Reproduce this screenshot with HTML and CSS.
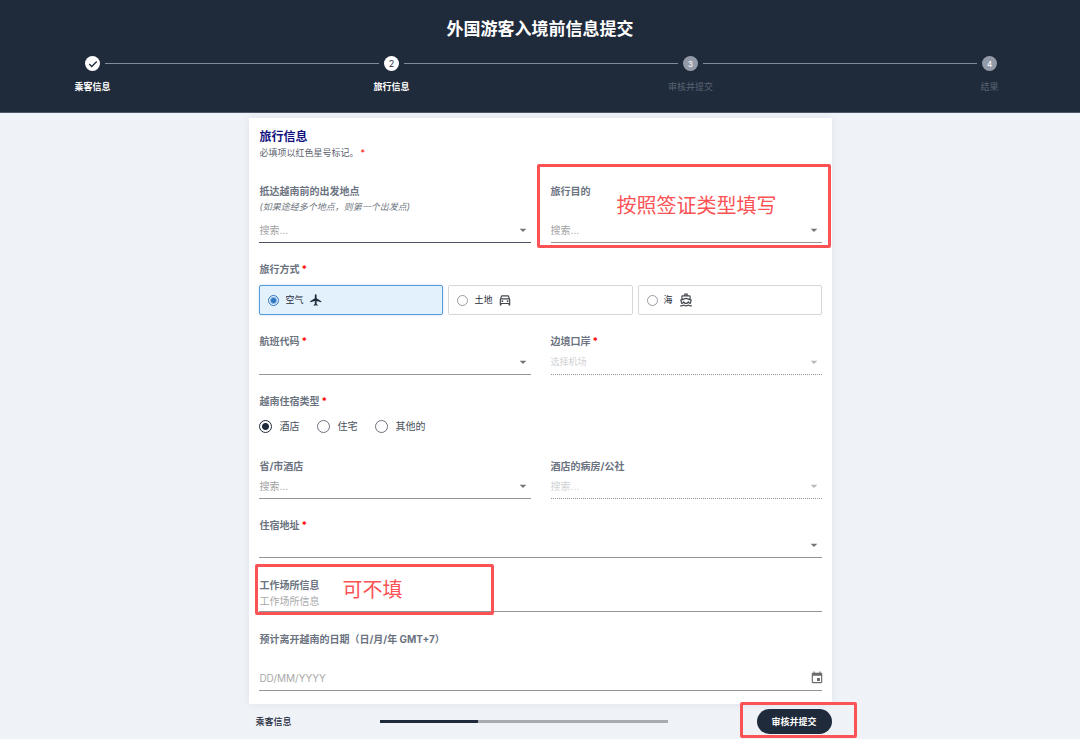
FILE: index.html
```html
<!DOCTYPE html>
<html lang="zh-CN">
<head>
<meta charset="utf-8">
<meta name="viewport" content="width=device-width, initial-scale=1">
<title>外国游客入境前信息提交</title>
<link rel="stylesheet" href="styles.css">
</head>
<body>
<svg class="sprite" aria-hidden="true">
  <symbol id="caret" viewBox="0 0 24 24"><path d="M7 10l5 5 5-5z"/></symbol>
</svg>
<header class="header">
  <h1 class="title">外国游客入境前信息提交</h1>
  <ol class="stepper">
    <li class="step">
      <span class="step-dot"><svg class="step-check" viewBox="0 0 24 24" aria-hidden="true"><path d="M3 12l6 6L21 6"/></svg></span>
      <span class="step-label">乘客信息</span>
    </li>
    <li class="step-line" aria-hidden="true"></li>
    <li class="step" aria-current="step">
      <span class="step-dot">2</span>
      <span class="step-label">旅行信息</span>
    </li>
    <li class="step-line" aria-hidden="true"></li>
    <li class="step step-todo">
      <span class="step-dot">3</span>
      <span class="step-label">审核并提交</span>
    </li>
    <li class="step-line" aria-hidden="true"></li>
    <li class="step step-todo">
      <span class="step-dot">4</span>
      <span class="step-label">结果</span>
    </li>
  </ol>
</header>

<main class="page">
  <form class="card" id="travel-form">
    <h2 class="card-title">旅行信息</h2>
    <p class="card-note">必填项以红色星号标记。<span class="required">*</span></p>

    <div class="row row-first">
      <div class="field">
        <label class="label" for="departure">抵达越南前的出发地点</label>
        <p class="hint">(如果途经多个地点，则第一个出发点)</p>
        <div class="control control-strong">
          <select class="select" id="departure"><option>搜索...</option></select>
          <svg class="caret" aria-hidden="true"><use href="#caret"/></svg>
        </div>
      </div>
      <div class="field marked">
        <label class="label" for="purpose">旅行目的</label>
        <div class="control">
          <select class="select" id="purpose"><option>搜索...</option></select>
          <svg class="caret" aria-hidden="true"><use href="#caret"/></svg>
        </div>
        <div class="mark mark-purpose">按照签证类型填写</div>
      </div>
    </div>

    <fieldset class="group">
      <legend class="label">旅行方式<span class="required">*</span></legend>
      <div class="choices">
        <label class="choice">
          <input class="radio radio-small" type="radio" name="mode" checked>
          <span>空气</span>
          <svg class="choice-icon" viewBox="0 0 24 24" aria-hidden="true"><path d="M21 16v-2l-8-5V3.500C13 2.670 12.330 2 11.500 2S10 2.670 10 3.500V9l-8 5v2l8-2.500V19l-2 1.500V22l3.500-1 3.500 1v-1.500L13 19v-5.500z"/></svg>
        </label>
        <label class="choice">
          <input class="radio radio-small" type="radio" name="mode">
          <span>土地</span>
          <svg class="choice-icon choice-icon-muted" viewBox="0 0 24 24" aria-hidden="true"><path fill-rule="evenodd" d="M18.920 5.010C18.720 4.420 18.160 4 17.500 4h-11c-.66 0-1.210.42-1.420 1.010L3 11v9.500c0 .55.450 1 1 1h1c.55 0 1-.450 1-1V19h12v1.500c0 .55.450 1 1 1h1c.55 0 1-.450 1-1V11zM6.850 6h10.290l1.080 3.110H5.770zM19 17H5v-5.660l.12-.34h13.770l.11.340z"/><circle cx="7.500" cy="14" r="1.500"/><circle cx="16.500" cy="14" r="1.500"/></svg>
        </label>
        <label class="choice">
          <input class="radio radio-small" type="radio" name="mode">
          <span>海</span>
          <svg class="choice-icon choice-icon-muted" viewBox="0 0 24 24" aria-hidden="true"><path fill-rule="evenodd" d="M13 3v1h-2V3h2m2-2H9v3H6c-1.100 0-2 .9-2 2v4.620l-1.290.42c-.26.080-.48.260-.6.500s-.14.520-.06.780L3.950 19H4c1.600 0 3.020-.88 4-2 .98 1.120 2.400 2 4 2s3.020-.88 4-2c.98 1.120 2.400 2 4 2h.05l1.890-6.680c.08-.26.060-.54-.06-.78s-.34-.42-.6-.5L20 10.620V6c0-1.100-.9-2-2-2h-3V1zM6 9.970V6h12v3.970L12 8 6 9.970zm10 3.910l-1.510 1.730C13.780 16.420 12.850 17 12 17s-1.780-.58-2.490-1.390L8 13.880l-1.510 1.730c-.34.390-.72.730-1.120.98l-1.040-3.670 1.920-.63 5.750-1.890 5.750 1.890 1.920.63-1.040 3.670c-.4-.25-.78-.59-1.120-.98zM20 21c-1.390 0-2.780-.47-4-1.320-2.440 1.710-5.560 1.710-8 0C6.780 20.530 5.390 21 4 21H2v2h2c1.380 0 2.740-.35 4-.99 2.520 1.290 5.480 1.290 8 0 1.260.65 2.620.99 4 .99h2v-2z"/></svg>
        </label>
      </div>
    </fieldset>

    <div class="row">
      <div class="field field-spaced">
        <label class="label" for="flight">航班代码<span class="required">*</span></label>
        <div class="control">
          <select class="select" id="flight"><option></option></select>
          <svg class="caret" aria-hidden="true"><use href="#caret"/></svg>
        </div>
      </div>
      <div class="field field-spaced">
        <label class="label" for="border-gate">边境口岸<span class="required">*</span></label>
        <div class="control control-off">
          <select class="select select-small" id="border-gate" disabled><option>选择机场</option></select>
          <svg class="caret" aria-hidden="true"><use href="#caret"/></svg>
        </div>
      </div>
    </div>

    <fieldset class="group">
      <legend class="label">越南住宿类型<span class="required">*</span></legend>
      <div class="options">
        <label class="option"><input class="radio" type="radio" name="stay" checked>酒店</label>
        <label class="option"><input class="radio" type="radio" name="stay">住宅</label>
        <label class="option"><input class="radio" type="radio" name="stay">其他的</label>
      </div>
    </fieldset>

    <div class="row row-spaced">
      <div class="field">
        <label class="label" for="province">省/市酒店</label>
        <div class="control">
          <select class="select" id="province"><option>搜索...</option></select>
          <svg class="caret" aria-hidden="true"><use href="#caret"/></svg>
        </div>
      </div>
      <div class="field">
        <label class="label" for="ward">酒店的病房/公社</label>
        <div class="control control-off">
          <select class="select" id="ward" disabled><option>搜索...</option></select>
          <svg class="caret" aria-hidden="true"><use href="#caret"/></svg>
        </div>
      </div>
    </div>

    <div class="row">
      <div class="field">
        <label class="label" for="address">住宿地址<span class="required">*</span></label>
        <div class="control">
          <select class="select" id="address"><option></option></select>
          <svg class="caret" aria-hidden="true"><use href="#caret"/></svg>
        </div>
      </div>
    </div>

    <div class="row row-text">
      <div class="field marked">
        <label class="label" for="workplace">工作场所信息</label>
        <div class="control control-short">
          <input class="input" id="workplace" type="text" placeholder="工作场所信息">
        </div>
        <div class="mark mark-workplace">可不填</div>
      </div>
    </div>

    <div class="row row-text">
      <div class="field field-date">
        <label class="label" for="leave-date">预计离开越南的日期（日/月/年 GMT+7）</label>
        <div class="control">
          <input class="input" id="leave-date" type="text" placeholder="DD/MM/YYYY">
          <button class="date-button" type="button" aria-label="选择日期"><svg class="date-icon" viewBox="0 0 24 24" aria-hidden="true"><path fill-rule="evenodd" d="M16 1v2H8V1H6v2H5c-1.110 0-2 .9-2 2v14c0 1.100.890 2 2 2h14c1.100 0 2-.9 2-2V5c0-1.100-.9-2-2-2h-1V1zM5 8h14v11H5zM12 12h5v5h-5z"/></svg></button>
        </div>
      </div>
    </div>
  </form>

  <footer class="footer">
    <a class="back" href="#">乘客信息</a>
    <progress class="progress" value="34" max="100" aria-label="进度"></progress>
    <div class="marked">
      <button class="submit" type="submit" form="travel-form">审核并提交</button>
      <div class="mark mark-submit"></div>
    </div>
  </footer>
</main>
</body>
</html>
```

FILE: styles.css
```css
* {
  box-sizing: border-box;
}

body {
  margin: 0;
  background: #eff3f8;
  color: #1f2a3b;
  font-family: Inter, "Noto Sans CJK SC", sans-serif;
  font-size: 10px;
  line-height: 16px;
}

h1, h2, p, ol, fieldset {
  margin: 0;
  padding: 0;
  border: 0;
}

.sprite {
  display: none;
}

/* Header and stepper */
.header {
  padding: 16px 0 17px;
  background: #1f2a3b;
  border-bottom: 1px solid #4e566a;
}

.title {
  color: #fff;
  font-size: 17px;
  font-weight: 700;
  line-height: 26px;
  text-align: center;
}

.stepper {
  display: flex;
  padding: 14px 83px 0 85px;
  list-style: none;
}

.step {
  display: flex;
  flex-direction: column;
  align-items: center;
  gap: 8px;
  width: 15px;
  color: #fff;
  font-size: 9px;
  font-weight: 700;
}

.step-dot {
  display: flex;
  align-items: center;
  justify-content: center;
  width: 15px;
  height: 15px;
  border-radius: 50%;
  background: #fff;
  color: #1f2a3b;
  font-weight: 400;
}

.step-check {
  width: 10px;
  height: 10px;
  fill: none;
  stroke: #1f2a3b;
  stroke-width: 3;
}

.step-label {
  white-space: nowrap;
}

.step-line {
  flex: 1;
  height: 1px;
  margin: 7px 5px 0;
  background: #858b96;
}

.step-todo {
  color: #5a6372;
  font-weight: 400;
}

.step-todo .step-dot {
  background: #949ba8;
  color: #fff;
  font-size: 8px;
}

/* Form card */
.page {
  width: 54%;
  min-width: 560px;
  margin: 5px auto 0;
  padding-left: 1px;
}

.card {
  padding: 10px 10px 13px;
  background: #fff;
  box-shadow: 0 0 8px rgba(31, 41, 90, 0.08);
}

.card-title {
  color: #12127f;
  font-size: 12px;
  font-weight: 700;
  line-height: 18px;
}

.card-note {
  color: #5c636e;
  font-size: 9px;
  line-height: 13px;
}

.required {
  margin-left: 2px;
  color: #f00;
}

.row {
  display: flex;
  gap: 20px;
  margin-top: 18px;
}

.row-first {
  margin-top: 24px;
}

.row-spaced {
  margin-top: 23px;
}

.row-text {
  margin-top: 19px;
}

.field {
  display: flex;
  flex: 1;
  flex-direction: column;
}

.field-spaced {
  gap: 1px;
}

.label {
  padding: 0;
  color: #6b7380;
  font-weight: 700;
}

.hint {
  margin-bottom: 3px;
  color: #6f7680;
  font-size: 9px;
  font-style: italic;
}

.control {
  display: grid;
  align-items: center;
  height: 25px;
  margin-top: auto;
  border-bottom: 1px solid #949494;
}

.control > * {
  grid-area: 1 / 1;
}

.control-strong {
  border-bottom-color: #4b5362;
}

.control-off {
  border-bottom-style: dotted;
}

.control-short {
  align-items: start;
  height: 19px;
}

.select,
.input {
  width: 100%;
  min-width: 0;
  height: 16px;
  padding: 0;
  border: 0;
  outline: 0;
  background: none;
  color: #a2a2a2;
  font: inherit;
  appearance: none;
}

.input::placeholder {
  color: #a9a9a9;
}

.select:disabled {
  color: #d0d2d4;
  opacity: 1;
}

.select-small {
  font-size: 9px;
}

.caret {
  justify-self: end;
  width: 16px;
  height: 16px;
  fill: #757575;
  pointer-events: none;
}

.control-off .caret {
  fill: #b8b8b8;
}

.field-date {
  gap: 19px;
}

.date-button {
  display: flex;
  justify-self: end;
  margin-right: -2px;
  padding: 0;
  border: 0;
  background: none;
}

.date-icon {
  width: 14px;
  height: 14px;
  fill: #6b6b6b;
}

/* Radio groups */
.group {
  min-width: 0;
  margin-top: 18px;
}

.choices {
  display: grid;
  grid-template-columns: repeat(3, 1fr);
  gap: 5px;
  margin-top: 8px;
}

.choice {
  display: flex;
  align-items: center;
  gap: 6px;
  height: 30px;
  padding: 0 8px;
  border: 1px solid #d6d6d6;
  border-radius: 2px;
  font-size: 9px;
}

.choice:has(:checked) {
  border-color: #5499dc;
  background: #e3f1fd;
  box-shadow: 0 0 3px rgba(84, 153, 220, 0.3);
}

.choice-icon {
  width: 14px;
  height: 14px;
  fill: #1f2a3b;
}

.choice-icon-muted {
  fill: #45494f;
}

.radio {
  width: 13px;
  height: 13px;
  margin: 0;
  border: 1px solid #6a707c;
  border-radius: 50%;
  appearance: none;
}

.radio:checked {
  border-color: #1f2a3b;
  background: radial-gradient(circle, #1f2a3b 3px, transparent 4px);
}

.radio-small {
  width: 11px;
  height: 11px;
  border-color: #9c9c9c;
}

.radio-small:checked {
  border-color: #2e75c2;
  background: radial-gradient(circle, #2e75c2 2px, transparent 4px);
}

.options {
  display: flex;
  gap: 18px;
  margin-top: 8px;
}

.option {
  display: flex;
  align-items: center;
  gap: 7px;
  height: 18px;
  color: #4a505b;
}

/* Bottom bar */
.footer {
  display: flex;
  align-items: center;
  justify-content: space-between;
  padding: 5px 0 5px 6px;
}

.back {
  color: #1f2a3b;
  font-size: 9px;
  font-weight: 500;
  text-decoration: none;
}

.progress {
  width: 50%;
  height: 3px;
  border: 0;
  background: #a8abb2;
  appearance: none;
}

.progress::-webkit-progress-bar {
  background: #a8abb2;
}

.progress::-webkit-progress-value {
  background: #1f2a3b;
}

.submit {
  display: block;
  height: 25px;
  padding: 0 15px;
  border: 0;
  border-radius: 13px;
  background: #1f2a3b;
  color: #fff;
  font: inherit;
  font-size: 9px;
  font-weight: 700;
}

/* Red callouts drawn over the form */
.marked {
  position: relative;
}

.mark {
  position: absolute;
  display: flex;
  align-items: center;
  border: 3px solid #fb5255;
  border-radius: 2px;
  color: #fb5255;
  font-size: 20px;
  pointer-events: none;
}

.mark-purpose {
  inset: -19px -9px -5px -14px;
  padding-left: 77px;
}

.mark-workplace {
  top: -13px;
  left: -4px;
  width: 239px;
  height: 51px;
  padding-left: 84px;
}

.mark-submit {
  inset: -7px -25px -4px -17px;
}
```
